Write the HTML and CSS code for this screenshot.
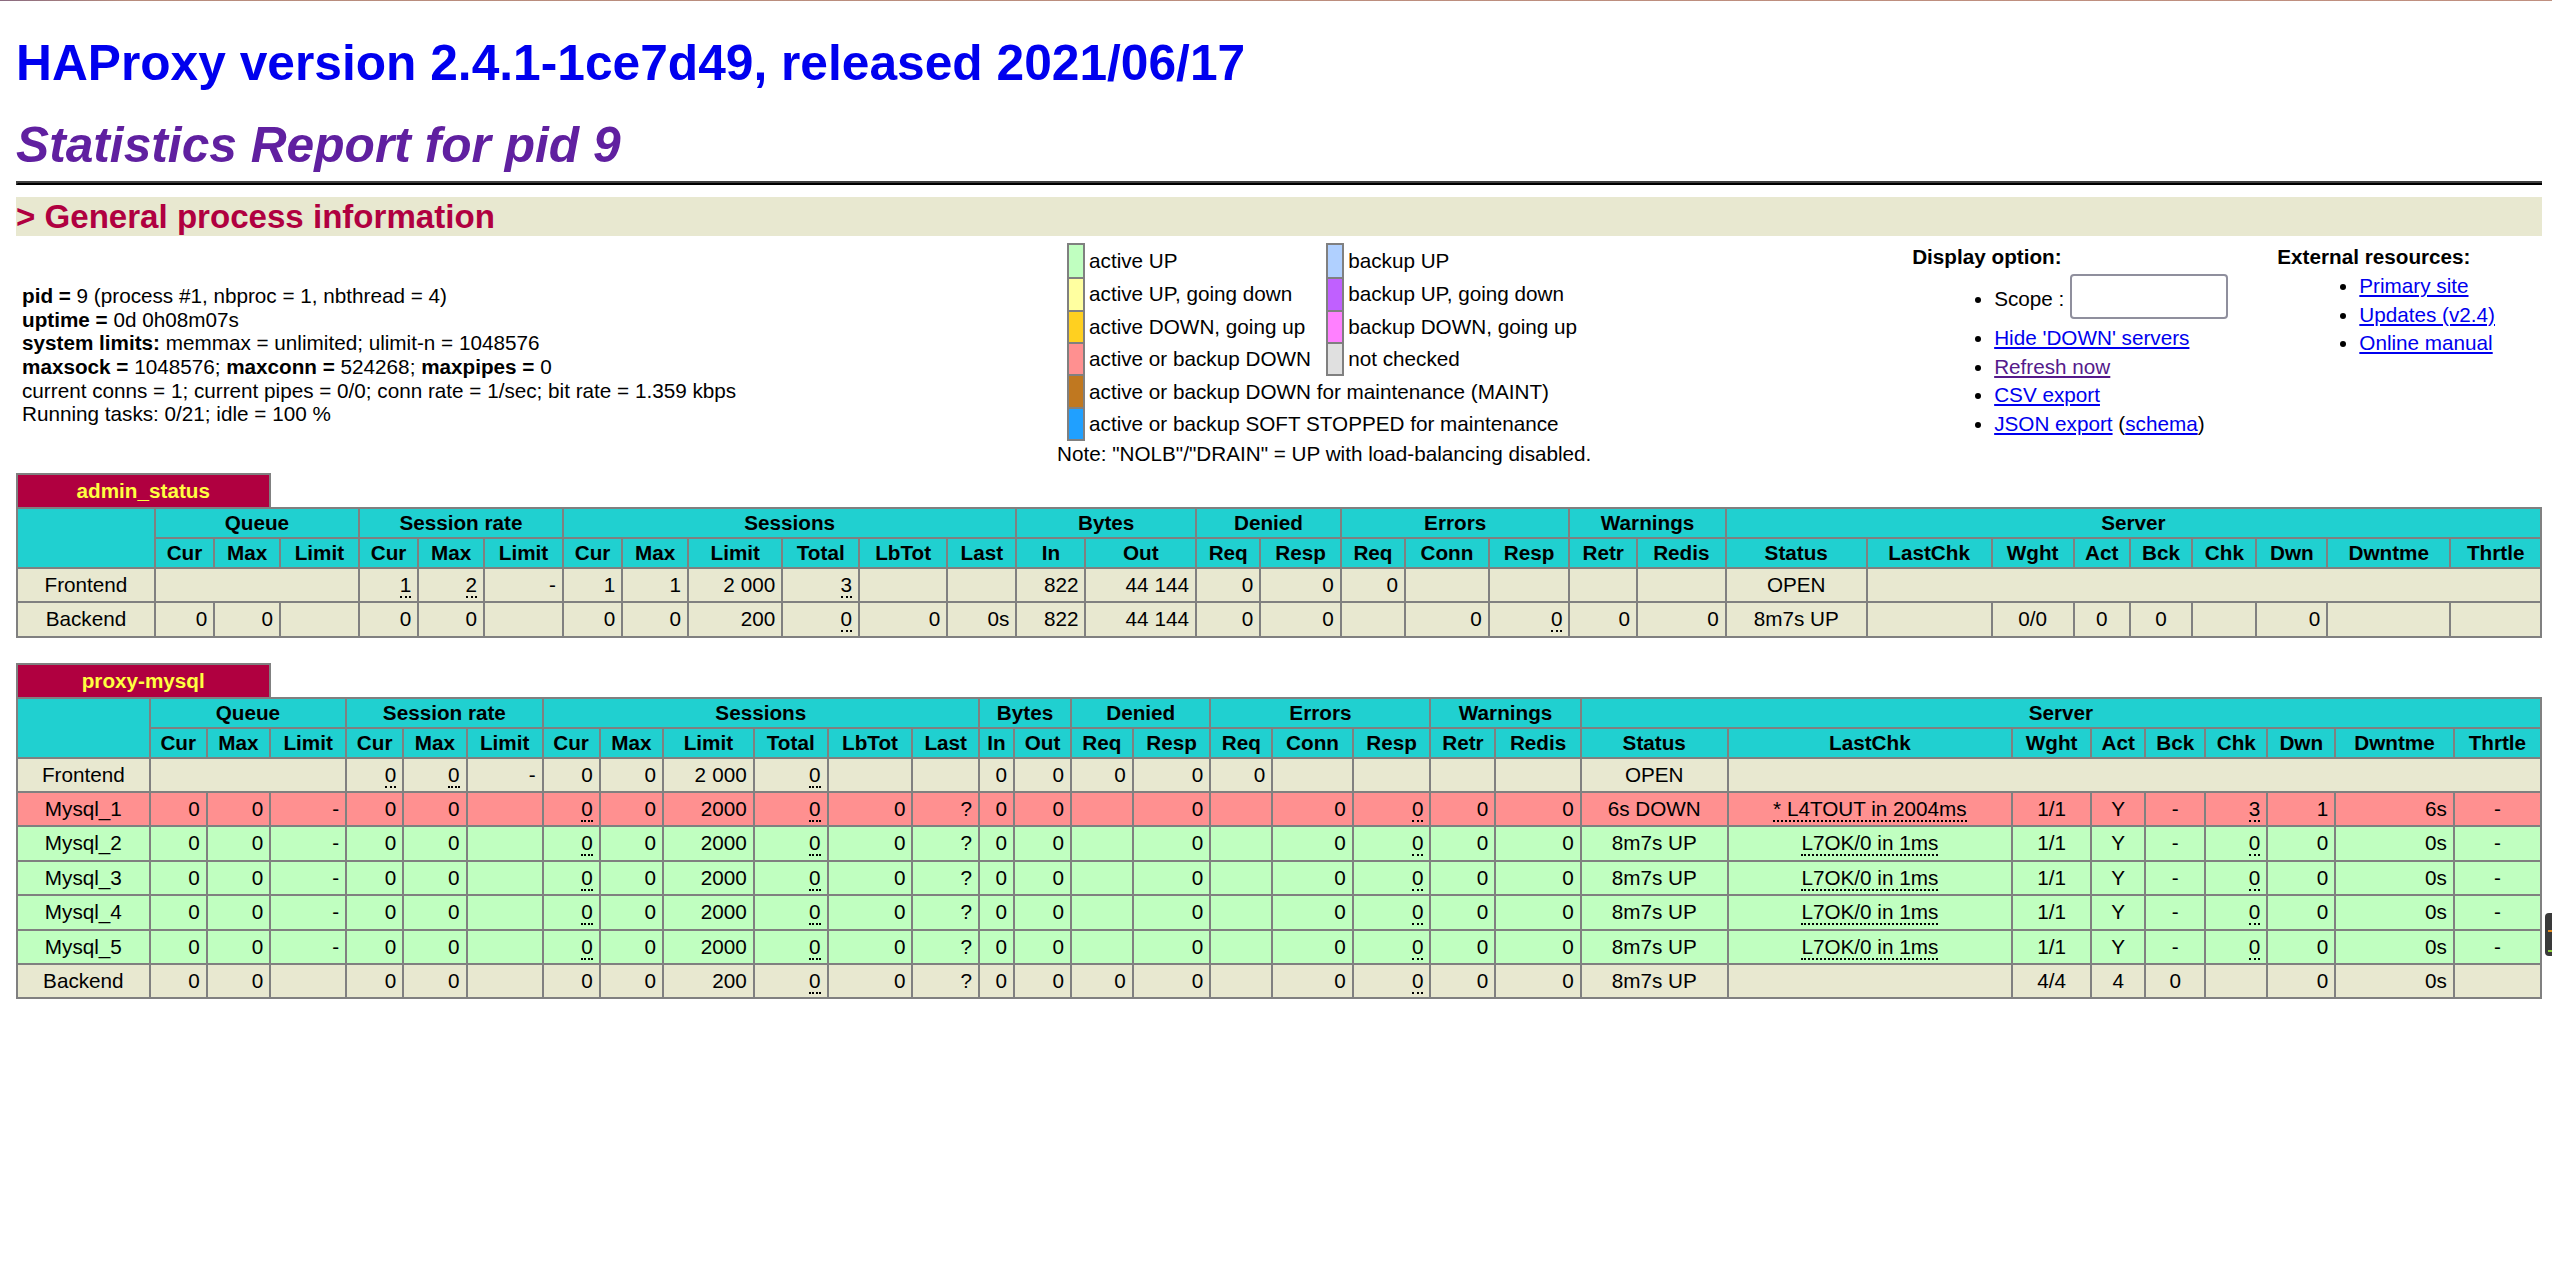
FILE: index.html
```html
<!DOCTYPE html>
<html>
<head>
<meta charset="utf-8">
<title>Statistics Report for HAProxy</title>
<link rel="stylesheet" href="styles.css">
</head>
<body>
<div class="topline"></div>
<h1><a class="home" href="#">HAProxy version 2.4.1-1ce7d49, released 2021/06/17</a></h1>
<h2>Statistics Report for pid 9</h2>
<hr class="hr">
<h3>&gt; General process information</h3>
<table class="info">
<tr>
<td class="info-left">
<p class="proc"><b>pid = </b> 9 (process #1, nbproc = 1, nbthread = 4)<br>
<b>uptime = </b> 0d 0h08m07s<br>
<b>system limits:</b> memmax = unlimited; ulimit-n = 1048576<br>
<b>maxsock = </b> 1048576; <b>maxconn = </b> 524268; <b>maxpipes = </b> 0<br>
current conns = 1; current pipes = 0/0; conn rate = 1/sec; bit rate = 1.359 kbps<br>
Running tasks: 0/21; idle = 100 %</p>
</td>
<td class="info-center">
<table class="lgd">
<tr><td class="active_up">&nbsp;</td><td class="noborder">active UP </td><td class="backup_up">&nbsp;</td><td class="noborder">backup UP </td></tr>
<tr><td class="active_going_down"></td><td class="noborder">active UP, going down </td><td class="backup_going_down"></td><td class="noborder">backup UP, going down </td></tr>
<tr><td class="active_going_up"></td><td class="noborder">active DOWN, going up </td><td class="backup_going_up"></td><td class="noborder">backup DOWN, going up </td></tr>
<tr><td class="active_down"></td><td class="noborder">active or backup DOWN &nbsp;</td><td class="backup_no_check"></td><td class="noborder">not checked </td></tr>
<tr><td class="maintain"></td><td class="noborder" colspan="3">active or backup DOWN for maintenance (MAINT) &nbsp;</td></tr>
<tr><td class="softstop"></td><td class="noborder" colspan="3">active or backup SOFT STOPPED for maintenance &nbsp;</td></tr>
</table>
<div class="note">Note: "NOLB"/"DRAIN" = UP with load-balancing disabled.</div>
</td>
<td class="info-side">
<b>Display option:</b>
<ul class="opts">
<li><form class="scope" action="#"><span class="scope-label">Scope :</span><input class="scope-input" value="" type="text" name="scope" size="8" maxlength="31"></form></li>
<li><a href="#">Hide 'DOWN' servers</a></li>
<li><a class="visited" href="#">Refresh now</a></li>
<li><a href="#">CSV export</a></li>
<li><a href="#">JSON export</a> (<a href="#">schema</a>)</li>
</ul>
</td>
<td class="info-side">
<b>External resources:</b>
<ul class="opts">
<li><a href="#">Primary site</a></li>
<li><a href="#">Updates (v2.4)</a></li>
<li><a href="#">Online manual</a></li>
</ul>
</td>
</tr>
</table>

<div class="proxy">
<table class="tbl pxhead">
<tr class="titre"><th class="pxname"><a class="px" href="#">admin_status</a></th><th class="empty"></th></tr>
</table>
<table class="tbl stats">
<tr class="titre"><th rowspan="2"></th><th colspan="3">Queue</th><th colspan="3">Session rate</th><th colspan="6">Sessions</th><th colspan="2">Bytes</th><th colspan="2">Denied</th><th colspan="3">Errors</th><th colspan="2">Warnings</th><th colspan="9">Server</th></tr>
<tr class="titre"><th>Cur</th><th>Max</th><th>Limit</th><th>Cur</th><th>Max</th><th>Limit</th><th>Cur</th><th>Max</th><th>Limit</th><th>Total</th><th>LbTot</th><th>Last</th><th>In</th><th>Out</th><th>Req</th><th>Resp</th><th>Req</th><th>Conn</th><th>Resp</th><th>Retr</th><th>Redis</th><th>Status</th><th>LastChk</th><th>Wght</th><th>Act</th><th>Bck</th><th>Chk</th><th>Dwn</th><th>Dwntme</th><th>Thrtle</th></tr>
<tr class="frontend"><td class="ac">Frontend</td><td colspan="3"></td><td><u>1</u></td><td><u>2</u></td><td>-</td><td>1</td><td>1</td><td><span class="rls">2</span>000</td><td><u>3</u></td><td></td><td></td><td>822</td><td>4<span class="rls">4</span>144</td><td>0</td><td>0</td><td>0</td><td></td><td></td><td></td><td></td><td class="ac">OPEN</td><td colspan="8"></td></tr>
<tr class="backend"><td class="ac">Backend</td><td>0</td><td>0</td><td></td><td>0</td><td>0</td><td></td><td>0</td><td>0</td><td>200</td><td><u>0</u></td><td>0</td><td>0s</td><td>822</td><td>4<span class="rls">4</span>144</td><td>0</td><td>0</td><td></td><td>0</td><td><u>0</u></td><td>0</td><td>0</td><td class="ac">8m7s UP</td><td class="ac"></td><td class="ac">0/0</td><td class="ac">0</td><td class="ac">0</td><td></td><td>0</td><td></td><td></td></tr>
</table>
</div>

<div class="proxy">
<table class="tbl pxhead">
<tr class="titre"><th class="pxname"><a class="px" href="#">proxy-mysql</a></th><th class="empty"></th></tr>
</table>
<table class="tbl stats">
<tr class="titre"><th rowspan="2"></th><th colspan="3">Queue</th><th colspan="3">Session rate</th><th colspan="6">Sessions</th><th colspan="2">Bytes</th><th colspan="2">Denied</th><th colspan="3">Errors</th><th colspan="2">Warnings</th><th colspan="9">Server</th></tr>
<tr class="titre"><th>Cur</th><th>Max</th><th>Limit</th><th>Cur</th><th>Max</th><th>Limit</th><th>Cur</th><th>Max</th><th>Limit</th><th>Total</th><th>LbTot</th><th>Last</th><th>In</th><th>Out</th><th>Req</th><th>Resp</th><th>Req</th><th>Conn</th><th>Resp</th><th>Retr</th><th>Redis</th><th>Status</th><th>LastChk</th><th>Wght</th><th>Act</th><th>Bck</th><th>Chk</th><th>Dwn</th><th>Dwntme</th><th>Thrtle</th></tr>
<tr class="frontend"><td class="ac">Frontend</td><td colspan="3"></td><td><u>0</u></td><td><u>0</u></td><td>-</td><td>0</td><td>0</td><td><span class="rls">2</span>000</td><td><u>0</u></td><td></td><td></td><td>0</td><td>0</td><td>0</td><td>0</td><td>0</td><td></td><td></td><td></td><td></td><td class="ac">OPEN</td><td colspan="8"></td></tr>
<tr class="active_down"><td class="ac">Mysql_1</td><td>0</td><td>0</td><td>-</td><td>0</td><td>0</td><td></td><td><u>0</u></td><td>0</td><td>2000</td><td><u>0</u></td><td>0</td><td>?</td><td>0</td><td>0</td><td></td><td>0</td><td></td><td>0</td><td><u>0</u></td><td>0</td><td>0</td><td class="ac">6s DOWN</td><td class="ac"><u>* L4TOUT in 2004ms</u></td><td class="ac">1/1</td><td class="ac">Y</td><td class="ac">-</td><td><u>3</u></td><td>1</td><td>6s</td><td class="ac">-</td></tr>
<tr class="active_up"><td class="ac">Mysql_2</td><td>0</td><td>0</td><td>-</td><td>0</td><td>0</td><td></td><td><u>0</u></td><td>0</td><td>2000</td><td><u>0</u></td><td>0</td><td>?</td><td>0</td><td>0</td><td></td><td>0</td><td></td><td>0</td><td><u>0</u></td><td>0</td><td>0</td><td class="ac">8m7s UP</td><td class="ac"><u>L7OK/0 in 1ms</u></td><td class="ac">1/1</td><td class="ac">Y</td><td class="ac">-</td><td><u>0</u></td><td>0</td><td>0s</td><td class="ac">-</td></tr>
<tr class="active_up"><td class="ac">Mysql_3</td><td>0</td><td>0</td><td>-</td><td>0</td><td>0</td><td></td><td><u>0</u></td><td>0</td><td>2000</td><td><u>0</u></td><td>0</td><td>?</td><td>0</td><td>0</td><td></td><td>0</td><td></td><td>0</td><td><u>0</u></td><td>0</td><td>0</td><td class="ac">8m7s UP</td><td class="ac"><u>L7OK/0 in 1ms</u></td><td class="ac">1/1</td><td class="ac">Y</td><td class="ac">-</td><td><u>0</u></td><td>0</td><td>0s</td><td class="ac">-</td></tr>
<tr class="active_up"><td class="ac">Mysql_4</td><td>0</td><td>0</td><td>-</td><td>0</td><td>0</td><td></td><td><u>0</u></td><td>0</td><td>2000</td><td><u>0</u></td><td>0</td><td>?</td><td>0</td><td>0</td><td></td><td>0</td><td></td><td>0</td><td><u>0</u></td><td>0</td><td>0</td><td class="ac">8m7s UP</td><td class="ac"><u>L7OK/0 in 1ms</u></td><td class="ac">1/1</td><td class="ac">Y</td><td class="ac">-</td><td><u>0</u></td><td>0</td><td>0s</td><td class="ac">-</td></tr>
<tr class="active_up"><td class="ac">Mysql_5</td><td>0</td><td>0</td><td>-</td><td>0</td><td>0</td><td></td><td><u>0</u></td><td>0</td><td>2000</td><td><u>0</u></td><td>0</td><td>?</td><td>0</td><td>0</td><td></td><td>0</td><td></td><td>0</td><td><u>0</u></td><td>0</td><td>0</td><td class="ac">8m7s UP</td><td class="ac"><u>L7OK/0 in 1ms</u></td><td class="ac">1/1</td><td class="ac">Y</td><td class="ac">-</td><td><u>0</u></td><td>0</td><td>0s</td><td class="ac">-</td></tr>
<tr class="backend"><td class="ac">Backend</td><td>0</td><td>0</td><td></td><td>0</td><td>0</td><td></td><td>0</td><td>0</td><td>200</td><td><u>0</u></td><td>0</td><td>?</td><td>0</td><td>0</td><td>0</td><td>0</td><td></td><td>0</td><td><u>0</u></td><td>0</td><td>0</td><td class="ac">8m7s UP</td><td class="ac"></td><td class="ac">4/4</td><td class="ac">4</td><td class="ac">0</td><td></td><td>0</td><td>0s</td><td></td></tr>
</table>
</div>
<div class="edge-widget"><span class="mark m1"></span><span class="mark m2"></span></div>
</body>
</html>
```

FILE: styles.css
```css
html { background: white; }
body {
  font-family: "Liberation Sans", Arial, Helvetica, sans-serif;
  font-size: 24.84px;
  font-weight: normal;
  color: black;
  background: white;
  margin: 0 10px 16px 16px;
}
.topline {
  position: absolute;
  top: 0; left: 0; right: 0;
  height: 1px;
  background: linear-gradient(to right, #8a6a80 0, #b88c7c 5%, #c09080 100%);
}
th, td { font-size: 20.7px; }
h1 {
  font-size: 49.7px;
  line-height: 57.6px;
  font-weight: bold;
  margin: 35px 0 24px 0;
}
a { color: #0000ee; }
a.visited { color: #551a8b; }
a.home { text-decoration: none; color: #0000ee; }
h2 {
  font-family: "Liberation Sans", Helvetica, Arial, sans-serif;
  font-size: 49.7px;
  line-height: 57.6px;
  font-weight: bold;
  font-style: italic;
  color: #6020a0;
  margin: 0;
}
.hr {
  width: 100%;
  height: 0;
  margin: 7px 0 12px 0;
  border-style: solid;
  border-width: 2px;
  border-color: #404040 #7a7a7a #000000 #404040;
}
h3 {
  font-family: "Liberation Sans", Helvetica, Arial, sans-serif;
  font-size: 33.1px;
  line-height: 39px;
  font-weight: bold;
  color: #b00040;
  background: #e8e8d0;
  margin: 0;
}

/* general information */
table.info {
  width: 100%;
  margin-top: 1px;
  border-spacing: 4px;
  border-collapse: separate;
}
table.info > tbody > tr > td { padding: 2px; }
td.info-left {
  width: 1%;
  white-space: nowrap;
  text-align: left;
  vertical-align: middle;
  line-height: 23.7px;
}
p.proc { margin: 20px 0; }
td.info-center {
  text-align: center;
  white-space: nowrap;
  vertical-align: middle;
}
.note { line-height: 25.4px; }
table.info > tbody > tr > td.info-side {
  width: 1%;
  white-space: nowrap;
  text-align: left;
  vertical-align: top;
  line-height: 23.7px;
  padding-top: 4px;
}
ul.opts {
  margin: 5px 0 20px 0;
  padding-left: 82px;
}
ul.opts li {
  margin-top: 5px;
  margin-right: 41px;
}
form.scope {
  display: flex;
  align-items: flex-end;
  margin: 0;
}
.scope-label {
  margin-right: 6px;
  margin-bottom: 10px;
}
.scope-input {
  box-sizing: border-box;
  width: 158px;
  height: 45px;
  padding: 2px 4px;
  border: 2px solid #8f8f9d;
  border-radius: 4px;
  background: white;
  font-family: "Liberation Sans", Arial, sans-serif;
  font-size: 27.6px;
  margin: 0 0 2px 0;
}

/* legend */
table.lgd {
  border-collapse: collapse;
  border-width: 2px;
  border-style: none none none solid;
  border-color: black;
  margin: 0 auto;
  text-align: left;
}
table.lgd td {
  border: 2px solid gray;
  padding: 4px;
  line-height: 24.2px;
}
table.lgd td.noborder {
  border-style: none;
  padding: 4px;
  white-space: nowrap;
}
.active_down { background: #ff9090; }
.active_going_up { background: #ffd020; }
.active_going_down { background: #ffffa0; }
.active_up { background: #c0ffc0; }
.backup_up { background: #b0d0ff; }
.backup_going_down { background: #c060ff; }
.backup_going_up { background: #ff80ff; }
.backup_no_check { background: #e0e0e0; }
.maintain { background: #c07820; }
.softstop { background: #20a0ff; }
.frontend { background: #e8e8d0; }
.backend { background: #e8e8d0; }

/* proxy tables */
.proxy + .proxy { margin-top: 25px; }
table.tbl {
  border-collapse: collapse;
  border-style: none;
  width: 100%;
}
.titre {
  background: #20d0d0;
  color: #000000;
  font-weight: bold;
  text-align: center;
}
table.tbl th {
  border: 2px solid gray;
  padding: 2px;
  line-height: 24px;
}
table.tbl td {
  text-align: right;
  border: 2px solid gray;
  padding: 4px 6px;
  white-space: nowrap;
  line-height: 24.4px;
}
table.tbl td.ac { text-align: center; }
table.tbl th.pxname {
  width: 10%;
  background: #b00040;
  color: #ffff40;
  font-weight: bold;
  border-style: solid solid none solid;
  padding: 4px 6px;
  white-space: nowrap;
}
table.tbl th.empty {
  width: 90%;
  border-style: none;
  background: white;
}
a.px { color: #ffff40; text-decoration: none; }
u {
  text-decoration: none;
  border-bottom: 2px dotted black;
}
.rls {
  letter-spacing: 0.2em;
  margin-right: 2px;
}
.edge-widget {
  position: absolute;
  top: 913px;
  right: 0;
  width: 7px;
  height: 43px;
  background: #3a3a3a;
  border-radius: 4px 0 0 4px;
}
.mark {
  position: absolute;
  left: 3px;
  width: 4px;
  height: 2px;
}
.m1 { top: 17px; background: #e08a20; }
.m2 { top: 37px; background: #8fd040; }
```
